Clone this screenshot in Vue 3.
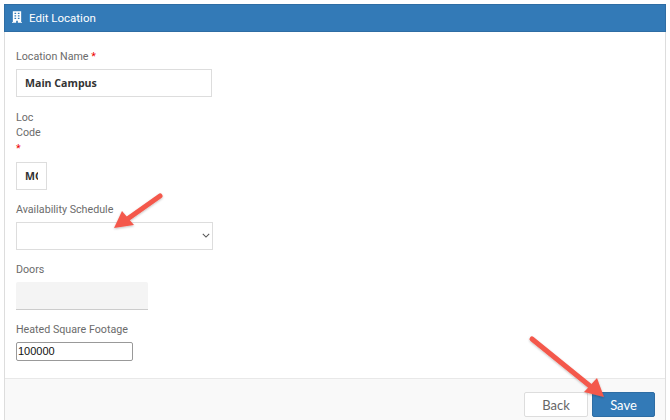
<script setup>
const arrows = [
  { line: 'M160 196 L126 220', head: '114,228 122,211 134,225' },
  { line: 'M532 339 L590 386', head: '604,397 584,392 597,378' }
]
</script>

<template>
  <div class="page">
    <div class="panel">
      <div class="panel-head">
        <svg class="head-icon" viewBox="0 0 12 14" width="10" height="12">
          <path fill="#fff" fill-rule="evenodd" d="M1 0h10v13h1v1H7v-2.500H5V14H0v-1h1zM3 2v1.500h2V2zm4 0v1.500h2V2zM3 5v1.500h2V5zm4 0v1.500h2V5zM3 8v1.500h2V8zm4 0v1.500h2V8z" />
        </svg>
        <span>Edit Location</span>
      </div>

      <div class="panel-body">
        <div class="field name-field">
          <label>Location Name <span class="req">*</span></label>
          <input class="text-box name-box" type="text" value="Main Campus" />
        </div>

        <div class="field code-field">
          <label class="narrow">Loc Code <span class="req">*</span></label>
          <input class="text-box code-box" type="text" value="MC" />
        </div>

        <div class="field schedule-field">
          <label>Availability Schedule</label>
          <div class="select-box">
            <svg viewBox="0 0 10 6" width="8" height="5">
              <path d="M1 1l4 4 4-4" fill="none" stroke="#555" stroke-width="1.300" />
            </svg>
          </div>
        </div>

        <div class="field doors-field">
          <label>Doors</label>
          <div class="doors-box"></div>
        </div>

        <div class="field sqft-field">
          <label>Heated Square Footage</label>
          <input class="sqft-box" type="text" value="100000" />
        </div>
      </div>

      <div class="panel-foot">
        <button class="btn back">Back</button>
        <button class="btn save">Save</button>
      </div>
    </div>

    <svg class="arrows" width="670" height="420" viewBox="0 0 670 420">
      <defs>
        <filter id="arrow-shadow" x="-20%" y="-20%" width="140%" height="140%">
          <feDropShadow dx="0" dy="1" stdDeviation="1" flood-color="#000" flood-opacity="0.25" />
        </filter>
      </defs>
      <g v-for="a in arrows" :key="a.line" filter="url(#arrow-shadow)">
        <path :d="a.line" stroke="#f4594c" stroke-width="5" stroke-linecap="round" fill="none" />
        <polygon :points="a.head" fill="#f4594c" />
      </g>
    </svg>
  </div>
</template>

<style>
html,
body {
  margin: 0;
  background: #fff;
  overflow: hidden;
}
</style>

<style scoped>
.page {
  position: relative;
  width: 670px;
  height: 420px;
  padding: 4px 4px 0;
  box-sizing: border-box;
  font-family: Roboto, "Liberation Sans", sans-serif;
  overflow: hidden;
}

.panel {
  height: 416px;
  display: flex;
  flex-direction: column;
  border-left: 1px solid #ddd;
  border-right: 1px solid #ddd;
  box-sizing: border-box;
}

.panel-head {
  height: 28px;
  flex: none;
  margin: 0 -1px;
  display: flex;
  align-items: center;
  gap: 7px;
  padding-left: 7px;
  background: #337ab7;
  border: 1px solid #2e6da4;
  box-sizing: border-box;
  color: #fff;
  font-size: 11.500px;
}

.head-icon {
  margin-bottom: 2px;
}

.panel-body {
  flex: 1;
  padding: 17px 0 0 11px;
}

.field {
  display: flex;
  flex-direction: column;
  align-items: flex-start;
}

label {
  display: block;
  font-size: 10.700px;
  line-height: 15.500px;
  color: #6b6b6b;
}

.req {
  color: #e00;
}

.narrow {
  width: 30px;
}

.text-box {
  margin-top: 4px;
  height: 28px;
  padding: 0 8px;
  box-sizing: border-box;
  border: 1px solid #ddd;
  outline: none;
  background: #fff;
  font-family: "Open Sans", sans-serif;
  font-size: 10.600px;
  font-weight: 700;
  color: #333;
}

.name-box {
  width: 196px;
}

.code-field {
  margin-top: 13px;
}

.code-box {
  width: 31px;
  margin-top: 6px;
}

.schedule-field {
  margin-top: 12px;
}

.select-box {
  margin-top: 4px;
  width: 197px;
  height: 28px;
  box-sizing: border-box;
  border: 1px solid #ddd;
  display: flex;
  align-items: center;
  justify-content: flex-end;
  padding-right: 2px;
}

.doors-field {
  margin-top: 12px;
}

.doors-box {
  margin-top: 5px;
  width: 132px;
  height: 28px;
  box-sizing: border-box;
  background: #f4f4f4;
  border-bottom: 1px solid #ccc;
  border-radius: 2px 2px 0 0;
}

.sqft-field {
  margin-top: 12px;
}

.sqft-box {
  margin-top: 4px;
  width: 117px;
  height: 19px;
  box-sizing: border-box;
  padding: 0 1px;
  border: 1px solid #999;
  border-radius: 2px;
  outline: none;
  font-family: "Liberation Sans", Arial, sans-serif;
  font-size: 11px;
  color: #111;
}

.panel-foot {
  flex: none;
  height: 42px;
  display: flex;
  justify-content: flex-end;
  align-items: flex-start;
  gap: 4px;
  padding: 13px 10px 0 0;
  box-sizing: border-box;
  background: #f9f9f9;
  border-top: 1px solid #e8e8e8;
}

.btn {
  height: 25px;
  padding: 0;
  box-sizing: border-box;
  border-radius: 2px;
  font-family: Lato, sans-serif;
  font-size: 13px;
}

.back {
  width: 64px;
  background: #fff;
  border: 1px solid #ddd;
  color: #666;
}

.save {
  width: 63px;
  background: #337ab7;
  border: 1px solid #2e6da4;
  color: #fff;
}

.arrows {
  position: absolute;
  top: 0;
  left: 0;
  pointer-events: none;
}
</style>
